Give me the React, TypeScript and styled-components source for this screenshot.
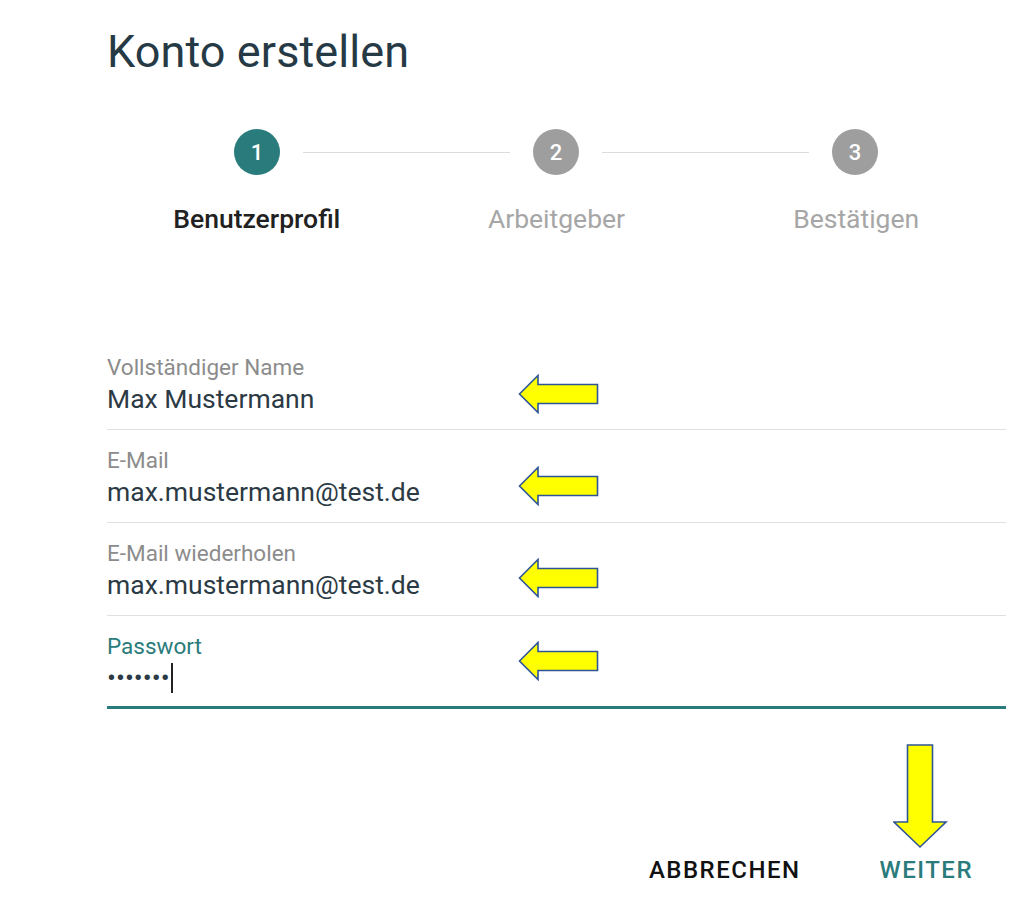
import React from "react";
import styled, { createGlobalStyle } from "styled-components";

const teal = "#2a7b7b";

const GlobalStyle = createGlobalStyle`
    body {
        margin: 0;
        background: #ffffff;
        font-family: Roboto, "Liberation Sans", sans-serif;
    }
`;

interface Field {
    label: string;
    value: string;
    focused?: boolean;
    arrowTop: number;
}

const steps = ["Benutzerprofil", "Arbeitgeber", "Bestätigen"];

const fields: Field[] = [
    { label: "Vollständiger Name", value: "Max Mustermann", arrowTop: 37 },
    { label: "E-Mail", value: "max.mustermann@test.de", arrowTop: 36 },
    { label: "E-Mail wiederholen", value: "max.mustermann@test.de", arrowTop: 35 },
    { label: "Passwort", value: "•••••••", focused: true, arrowTop: 25 },
];

const LeftArrow: React.FC<{ top: number }> = ({ top }) => (
    <ArrowMark style={{ top }} width="82" height="40" viewBox="0 0 82 40">
        <polygon
            points="1.5,20 20,1.5 20,10.5 79.5,10.5 79.5,29.5 20,29.5 20,38.5"
            fill="#ffff00"
            stroke="#2f5597"
            strokeWidth="1.6"
            strokeLinejoin="miter"
        />
    </ArrowMark>
);

export default function App() {
    return (
        <Page>
            <GlobalStyle />
            <Title>Konto erstellen</Title>
            <Stepper>
                <StepTrack>
                    {steps.map((s, i) => (
                        <React.Fragment key={s}>
                            {i > 0 && <Connector />}
                            <Circle active={i === 0}>{i + 1}</Circle>
                        </React.Fragment>
                    ))}
                </StepTrack>
                <StepLabels>
                    {steps.map((s, i) => (
                        <StepLabel key={s} active={i === 0}>
                            {s}
                        </StepLabel>
                    ))}
                </StepLabels>
            </Stepper>
            <Form>
                {fields.map(f => (
                    <FieldRow key={f.label} focused={f.focused}>
                        <FieldLabel focused={f.focused}>{f.label}</FieldLabel>
                        <FieldValue>
                            {f.value}
                            {f.focused && <Caret />}
                        </FieldValue>
                        <LeftArrow top={f.arrowTop} />
                    </FieldRow>
                ))}
            </Form>
            <Actions>
                <TextButton>ABBRECHEN</TextButton>
                <TextButton primary>
                    WEITER
                    <DownArrow width="56" height="106" viewBox="0 0 56 106">
                        <polygon
                            points="14.5,1 39.5,1 39.5,78 53,78 27,103 1,78 14.5,78"
                            fill="#ffff00"
                            stroke="#2f5597"
                            strokeWidth="1.6"
                        />
                    </DownArrow>
                </TextButton>
            </Actions>
        </Page>
    );
}

const Page = styled.div`
    width: 1027px;
    height: 920px;
    box-sizing: border-box;
    padding: 24px 21px 0 107px;
    display: flex;
    flex-direction: column;
`;

const Title = styled.h1`
    margin: 0;
    font-size: 45px;
    line-height: 56px;
    font-weight: 400;
    color: #263a46;
    letter-spacing: 0.1px;
`;

const Stepper = styled.div`
    margin-top: 49px;
    display: flex;
    flex-direction: column;
    gap: 29px;
`;

const StepTrack = styled.div`
    display: flex;
    align-items: center;
    padding: 0 128px 0 127px;
`;

const Connector = styled.div`
    flex: 1;
    height: 1px;
    background: #dcdcdc;
    margin: 0 23px;
`;

const Circle = styled.div<{ active?: boolean }>`
    width: 46px;
    height: 46px;
    border-radius: 50%;
    background: ${p => (p.active ? teal : "#9e9e9e")};
    color: #ffffff;
    font-size: 22px;
    font-weight: 500;
    display: flex;
    align-items: center;
    justify-content: center;
`;

const StepLabels = styled.div`
    display: grid;
    grid-template-columns: repeat(3, 1fr);
`;

const StepLabel = styled.div<{ active?: boolean }>`
    text-align: center;
    font-size: 26.5px;
    line-height: 30px;
    font-weight: ${p => (p.active ? 500 : 400)};
    color: ${p => (p.active ? "#212121" : "#a6a6a6")};
`;

const Form = styled.div`
    margin-top: 103px;
    display: flex;
    flex-direction: column;
`;

const FieldRow = styled.div<{ focused?: boolean }>`
    position: relative;
    padding: ${p => (p.focused ? "17px 0 12px" : "17px 0 14px")};
    border-bottom: ${p => (p.focused ? `3px solid ${teal}` : "1px solid #e0e0e0")};
    display: flex;
    flex-direction: column;
    gap: 3px;
`;

const FieldLabel = styled.div<{ focused?: boolean }>`
    font-size: 22.5px;
    line-height: 26px;
    color: ${p => (p.focused ? teal : "#8c8c8c")};
`;

const FieldValue = styled.div`
    font-size: 26.5px;
    line-height: 32px;
    color: #2b3a44;
    display: flex;
    align-items: center;
`;

const Caret = styled.span`
    display: inline-block;
    width: 2px;
    height: 30px;
    background: #222;
    margin-left: 1px;
`;

const ArrowMark = styled.svg`
    position: absolute;
    left: 411px;
`;

const Actions = styled.div`
    margin-top: 146px;
    display: flex;
    justify-content: flex-end;
    gap: 79px;
    padding-right: 33px;
`;

const TextButton = styled.button<{ primary?: boolean }>`
    position: relative;
    border: none;
    background: none;
    padding: 0;
    font-family: Roboto, "Liberation Sans", sans-serif;
    font-size: 24px;
    line-height: 30px;
    font-weight: 500;
    letter-spacing: 1.5px;
    color: ${p => (p.primary ? teal : "#111111")};
    cursor: pointer;
`;

const DownArrow = styled.svg`
    position: absolute;
    left: 13px;
    bottom: 35px;
`;
